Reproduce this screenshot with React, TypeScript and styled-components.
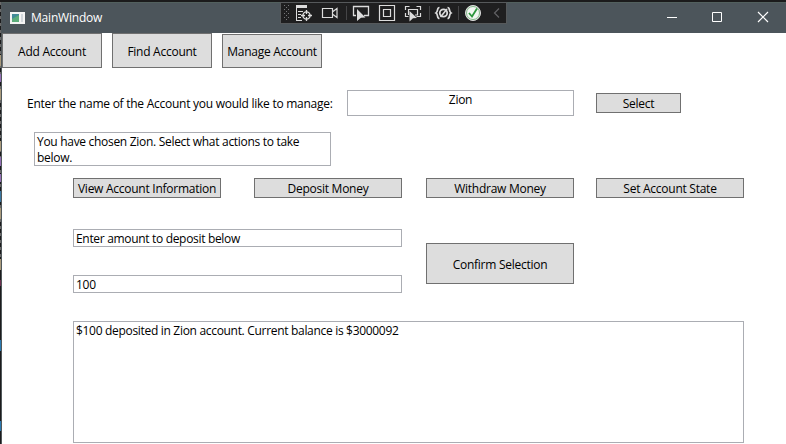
import React from 'react';
import styled, { createGlobalStyle } from 'styled-components';

const Global = createGlobalStyle`
  * { box-sizing: border-box; }
  html, body { margin: 0; padding: 0; overflow: hidden; background: #1b1b1c; }
`;

const Screen = styled.div`
  display: flex;
  width: 786px;
  height: 444px;
  padding-top: 2px;
  overflow: hidden;
  background: #1b1b1c;
  color: #000;
  font: 12px/16px "Segoe UI", "Open Sans", "Noto Sans", sans-serif;
`;

const EditorEdge = styled.svg`
  flex: none;
  width: 1px;
  height: 442px;
`;

const Window = styled.main`
  position: relative;
  flex: 1;
  height: 442px;
  border-left: 1px solid #50575a;
  background: #fff;
`;

const TitleBar = styled.header`
  display: flex;
  align-items: center;
  height: 31px;
  padding-left: 8px;
  border-top: 1px solid #52605e;
  background: #4c555b;
  color: #fff;
`;

const AppIcon = styled.svg`
  width: 15px;
  height: 12px;
  margin-right: 6px;
`;

const Caption = styled.div`
  display: flex;
  margin-left: auto;
`;

const CaptionButton = styled.svg`
  width: 46px;
  height: 30px;
`;

const DebugBar = styled.div`
  position: absolute;
  left: 278px;
  top: 0;
  width: 227px;
  height: 22px;
  border: 1px solid #56595b;
  background: #1f1f20;
`;

const Text = styled.span<{ $track?: number }>`
  display: inline-block;
  white-space: pre;
  letter-spacing: ${(p) => p.$track ?? -0.26}px;
`;

const Row = styled.div<{ $left?: number; $top?: number; $gap?: number }>`
  display: flex;
  align-items: flex-start;
  gap: ${(p) => p.$gap ?? 0}px;
  margin-left: ${(p) => p.$left ?? 0}px;
  margin-top: ${(p) => p.$top ?? 0}px;
`;

const Column = styled.div`
  display: flex;
  flex-direction: column;
  gap: 28px;
`;

const Button = styled.button<{ $w: number; $h?: number; $ml?: number; $mt?: number }>`
  display: flex;
  flex: none;
  align-items: center;
  justify-content: center;
  width: ${(p) => p.$w}px;
  height: ${(p) => p.$h ?? 20}px;
  margin: ${(p) => p.$mt ?? 0}px 0 0 ${(p) => p.$ml ?? 0}px;
  padding: ${(p) => (p.$h === 35 || p.$h === 41 ? 2 : 1)}px 0 0;
  border: 1px solid #707070;
  border-radius: 0;
  background: #ddd;
  color: #000;
  font: inherit;
`;

const Field = styled.div<{ $w: number; $h: number; $center?: boolean }>`
  flex: none;
  width: ${(p) => p.$w}px;
  height: ${(p) => p.$h}px;
  padding: 1px 2px;
  border: 1px solid #abadb3;
  background: #fff;
  text-align: ${(p) => (p.$center ? 'center' : 'left')};
`;

const Label = styled.label`
  width: 320px;
  padding-top: 6px;
`;

const editorMarks: [number, number, string][] = [
  [55, 11, '#a99a7c'], [74, 8, '#9470b5'], [89, 11, '#a99a7c'], [141, 10, '#a99a7c'],
  [157, 9, '#9470b5'], [174, 8, '#9470b5'], [191, 11, '#3b76a0'], [208, 11, '#a99a7c'],
  [259, 11, '#a99a7c'], [280, 6, '#6d3150'], [340, 11, '#2b79b0'], [421, 10, '#2b79b0'],
];

function Tools() {
  const dots = [];
  for (let y = 0; y < 8; y++) {
    for (let x = 0; x < 2; x++) dots.push(<rect key={`${x}-${y}`} x={3 + x * 4 + (y % 2) * 2 - (x && y % 2 ? 4 : 0)} y={2 + y * 2} width="1" height="1" />);
  }
  return (
    <svg width="225" height="20" viewBox="0 0 225 20" fill="none" stroke="#dcdcdc">
      <g fill="#77777a" stroke="none">{dots}</g>
      <path d="M15 2h11v3H15z" fill="#dcdcdc" stroke="none" />
      <path d="M15.5 5v12M15 17.500h6M17 8.500h5M17 11.500h3M17 14.500h3" />
      <circle cx="25.500" cy="12.500" r="3.600" strokeWidth="1.400" />
      <path d="M25.500 7v4M25.500 14v4M20 12.500h4M27 12.500h4" strokeWidth="1.300" />
      <path d="M41.500 5.500h10v9h-10zM52 8.500l4-3v9l-4-3" strokeWidth="1.200" />
      <path d="M65.500 3v14M148.500 3v14M177.500 3v14" stroke="#454547" />
      <path d="M75 12.500h-2.500v-9h15v9H83" strokeWidth="1.300" />
      <path d="M76 6l8.500 8.500-4.500.3-4 3.200z" fill="#dcdcdc" stroke="none" />
      <path d="M98.500 2.500h15v15h-15zM102.500 6.500h7v7h-7z" strokeWidth="1.200" />
      <path d="M124.500 7V3.500h4M135.500 3.500h4V7M139.500 10v3.500h-4M124.500 10v3.500h3M127.500 12V6.500h9V12H134" strokeWidth="1.200" />
      <path d="M128.500 8l7.500 7-4 .3-3.500 3.200z" fill="#dcdcdc" stroke="none" />
      <path d="M158.500 4.500c-3 0-1 4-3.500 5.500 2.500 1.500.5 5.500 3.500 5.500M166.500 4.500c3 0 1 4 3.500 5.500-2.500 1.500-.5 5.500-3.500 5.500" strokeWidth="1.700" />
      <circle cx="162.500" cy="10" r="3.700" strokeWidth="1.800" />
      <path d="M159.500 14l6.500-8" strokeWidth="1.600" />
      <circle cx="192" cy="10" r="7.500" fill="#f2f7f2" />
      <circle cx="192" cy="10" r="6.500" stroke="#83b588" />
      <path d="M188 10l3 3.500 5-8" stroke="#2c963c" strokeWidth="1.800" />
      <path d="M218 5.500l-4.500 4.500 4.500 4.500" stroke="#626265" strokeWidth="1.200" />
    </svg>
  );
}

export default function App() {
  return (
    <Screen>
      <Global />
      <EditorEdge viewBox="0 0 1 442">
        <path d="M.5 0v260" stroke="#6a6a6a" strokeDasharray="3 4" />
        {editorMarks.map(([y, h, c]) => <rect key={y} y={y - 2} width="1" height={h} fill={c} />)}
      </EditorEdge>
      <Window>
        <TitleBar>
          <AppIcon viewBox="0 0 15 12">
            <path fill="#f4f4f4" d="M0 0h15v12H0z" />
            <path fill="#438b98" d="M2 2h7v8H2z" />
            <path fill="#5cad7b" d="M2 7l7-4v7H2z" />
            <path fill="#d2d7db" d="M11 2h2v8h-2z" />
          </AppIcon>
          <Text $track={-0.2}>MainWindow</Text>
          <Caption>
            <CaptionButton viewBox="0 0 46 30"><path d="M19 14.500h10" stroke="#fff" /></CaptionButton>
            <CaptionButton viewBox="0 0 46 30"><path d="M18.500 9.500h9v9h-9z" fill="none" stroke="#fff" /></CaptionButton>
            <CaptionButton viewBox="0 0 46 30"><path d="M18 9l10 10m0-10l-10 10" stroke="#fff" strokeWidth="1.200" /></CaptionButton>
          </Caption>
        </TitleBar>
        <DebugBar><Tools /></DebugBar>
        <Row $gap={10}>
          <Button $w={100} $h={35}><Text>Add Account</Text></Button>
          <Button $w={100} $h={35}><Text>Find Account</Text></Button>
          <Button $w={100} $h={34} $mt={1}><Text>Manage Account</Text></Button>
        </Row>
        <Row $left={25} $top={22}>
          <Label><Text>Enter the name of the Account you would like to manage:</Text></Label>
          <Field $w={227} $h={26} $center><Text>Zion</Text></Field>
          <Button $w={85} $ml={22} $mt={3}><Text>Select</Text></Button>
        </Row>
        <Row $left={32} $top={16}>
          <Field $w={297} $h={34}><Text $track={-0.3}>{'You have chosen Zion. Select what actions to take\nbelow.'}</Text></Field>
        </Row>
        <Row $left={71} $top={12}>
          <Button $w={148}><Text>View Account Information</Text></Button>
          <Button $w={148} $ml={33}><Text>Deposit Money</Text></Button>
          <Button $w={148} $ml={24}><Text>Withdraw Money</Text></Button>
          <Button $w={148} $ml={22}><Text>Set Account State</Text></Button>
        </Row>
        <Row $left={71} $top={31}>
          <Column>
            <Field $w={329} $h={18}><Text $track={-0.32}>Enter amount to deposit below</Text></Field>
            <Field $w={329} $h={18}><Text>100</Text></Field>
          </Column>
          <Button $w={148} $h={41} $ml={24} $mt={14}><Text>Confirm Selection</Text></Button>
        </Row>
        <Row $left={71} $top={28}>
          <Field $w={671} $h={122}><Text $track={-0.31}>$100 deposited in Zion account. Current balance is $3000092</Text></Field>
        </Row>
      </Window>
    </Screen>
  );
}
